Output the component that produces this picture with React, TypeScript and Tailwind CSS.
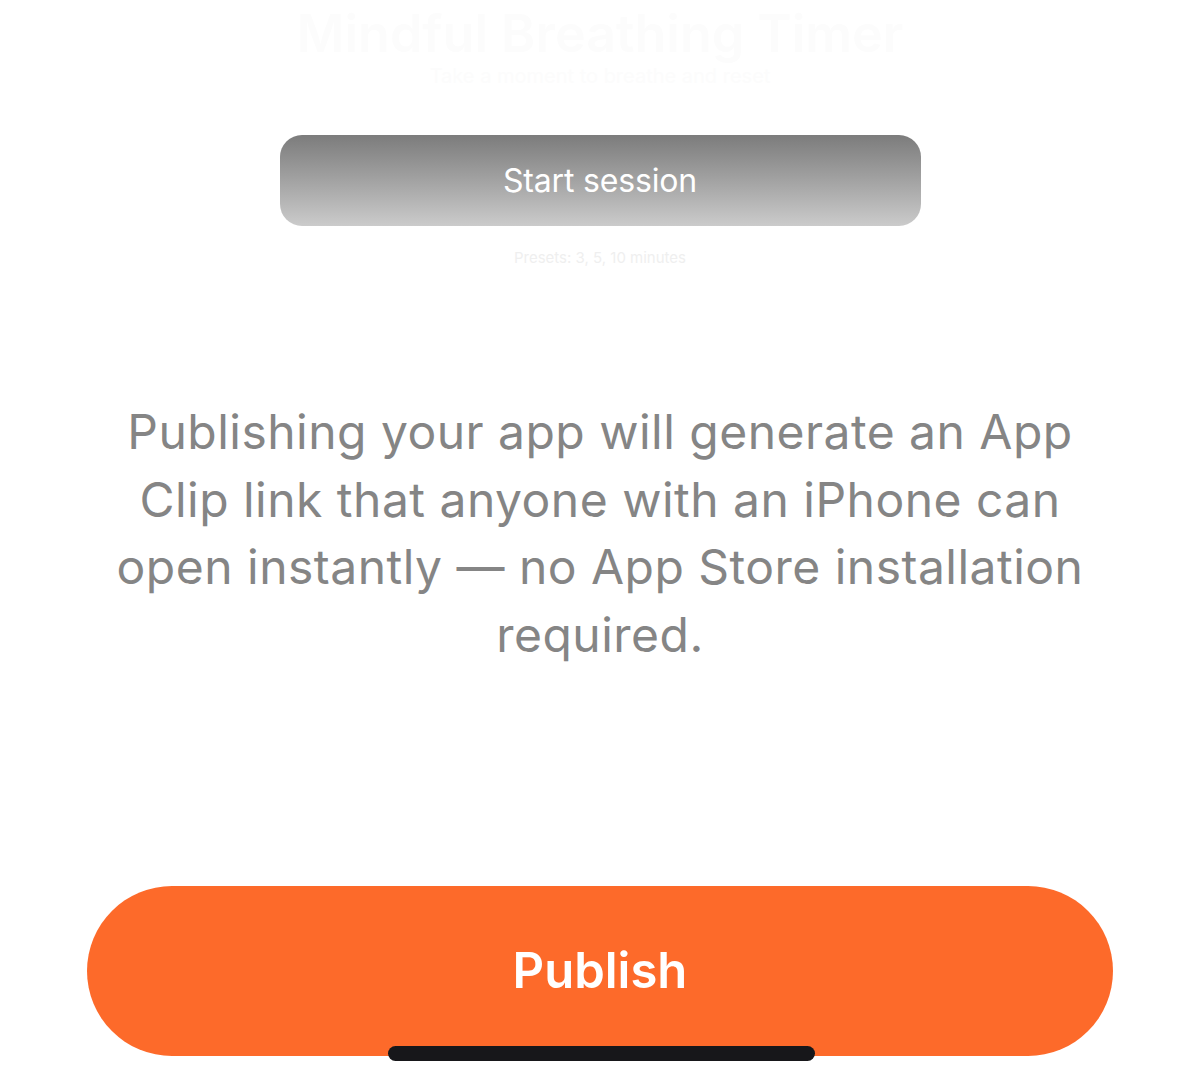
export default function App() {
  return (
    <div
      className="relative flex h-[1070px] w-[1200px] flex-col items-center overflow-hidden bg-white"
      style={{ fontFamily: 'Inter, "Noto Sans", sans-serif' }}
    >
      {/* faded header behind the sheet */}
      <div className="flex flex-col items-center pt-[6px] text-[#fcfcfc]">
        <div className="text-[52px] font-semibold leading-[56px]">Mindful Breathing Timer</div>
        <div className="text-[20px] leading-[28px]">Take a moment to breathe and reset</div>
      </div>

      {/* session button */}
      <button className="mt-[45px] flex h-[91px] w-[641px] items-center justify-center rounded-[22px] bg-gradient-to-b from-[#7c7c7c] to-[#cbcbcb] text-[32px] font-normal tracking-[-0.005em] text-white">
        Start session
      </button>
      <div className="mt-[22px] text-[15px] leading-[20px] text-[#efefef]">Presets: 3, 5, 10 minutes</div>

      {/* description */}
      <p className="mt-[130px] w-[1050px] text-center text-[48px] leading-[67.5px] tracking-[0.01em] text-[#858585]">
        Publishing your app will generate an App
        <br />
        Clip link that anyone with an iPhone can
        <br />
        open instantly — no App Store installation
        <br />
        required.
      </p>

      <div className="flex-1" />

      {/* primary action */}
      <div className="relative mb-[14px] flex w-full justify-center">
        <button className="flex h-[170px] w-[1026px] items-center justify-center rounded-full bg-[#fd6a2a] text-[49px] font-semibold text-white">
          Publish
        </button>
        {/* home indicator */}
        <div className="absolute bottom-[-5px] left-[388px] h-[15px] w-[427px] rounded-full bg-[#17171a]" />
      </div>
    </div>
  );
}
